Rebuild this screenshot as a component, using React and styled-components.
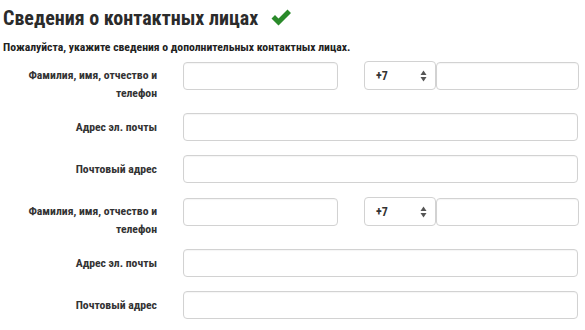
import React from "react";
import styled, { createGlobalStyle } from "styled-components";

const Global = createGlobalStyle`
  html, body { margin: 0; padding: 0; background: #fff; }
  body { font-family: "Roboto Condensed", Roboto, sans-serif; font-stretch: condensed; color: #333; }
  * { box-sizing: border-box; }
`;

const Page = styled.div`
  width: 585px;
  padding: 4px 8px 0 3px;
`;

const TitleRow = styled.div`
  display: flex;
  align-items: center;
  gap: 12px;
  height: 28px;
`;

const Title = styled.h2`
  margin: 0;
  font-size: 20px;
  font-weight: 700;
  color: #2b2b2b;
  line-height: 28px;
`;

const Intro = styled.p`
  margin: 8px 0 7px;
  font-size: 11.7px;
  font-weight: 700;
  line-height: 14px;
  color: #222;
`;

const Row = styled.div`
  display: flex;
  align-items: flex-start;
  margin-bottom: ${(p) => (p.$wide ? 11 : 14)}px;
`;

const Label = styled.label`
  width: 154px;
  flex: none;
  text-align: right;
  font-size: 11.7px;
  font-weight: 700;
  line-height: 18px;
  padding-top: 5px;
  color: #333;
`;

const Fields = styled.div`
  margin-left: 26px;
  display: flex;
  align-items: center;
`;

const Input = styled.input`
  width: ${(p) => p.$w}px;
  height: 28px;
  border: 1px solid #d2d2d2;
  border-radius: 4px;
  background: #fff;
  padding: 0 8px;
  outline: none;
  box-shadow: inset 0 1px 1px rgba(0,0,0,0.04);
`;

const Select = styled.div`
  margin-left: 26px;
  width: 72px;
  height: 29px;
  border: 1px solid #d2d2d2;
  border-radius: 4px;
  display: flex;
  align-items: center;
  justify-content: space-between;
  padding: 0 8px 0 11px;
  font-size: 12px;
  font-weight: 700;
  color: #333;
`;

const Phone = styled(Input)`
  margin-left: 0;
`;

const Arrows = () => (
  <svg width="7" height="12" viewBox="0 0 7 12">
    <path d="M3.5 0.5 L6.5 5 H0.5 Z" fill="#555" />
    <path d="M3.5 11.5 L6.5 7 H0.5 Z" fill="#555" />
  </svg>
);

const Check = () => (
  <svg width="22" height="18" viewBox="0 0 22 18">
    <path d="M1.5 9.5 L5 6 L8.5 9.5 L17.5 0.5 L21 4 L8.5 16.5 Z" fill="#2a8a2a" />
  </svg>
);

function Group() {
  return (
    <>
      <Row $wide>
        <Label>Фамилия, имя, отчество и телефон</Label>
        <Fields>
          <Input $w={155} />
          <Select>
            <span>+7</span>
            <Arrows />
          </Select>
          <Phone $w={143} />
        </Fields>
      </Row>
      <Row>
        <Label>Адрес эл. почты</Label>
        <Fields>
          <Input $w={395} />
        </Fields>
      </Row>
      <Row>
        <Label>Почтовый адрес</Label>
        <Fields>
          <Input $w={395} />
        </Fields>
      </Row>
    </>
  );
}

export default function App() {
  return (
    <Page>
      <Global />
      <TitleRow>
        <Title>Сведения о контактных лицах</Title>
        <Check />
      </TitleRow>
      <Intro>Пожалуйста, укажите сведения о дополнительных контактных лицах.</Intro>
      <Group />
      <Group />
    </Page>
  );
}
